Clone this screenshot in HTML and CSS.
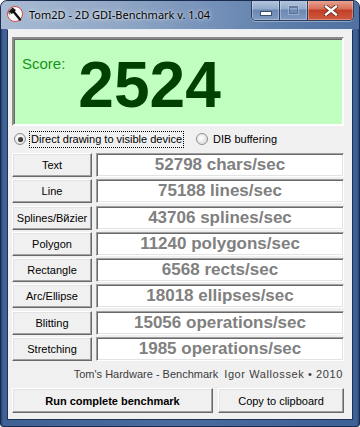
FILE: index.html
```html
<!DOCTYPE html>
<html lang="en">
<head>
    <meta charset="UTF-8">
    <meta name="viewport" content="width=device-width, initial-scale=1.0">
    <title>Tom2D - 2D GDI-Benchmark v. 1.04</title>
    <link rel="stylesheet" href="styles.css">
</head>
<body>

    <div class="window">
        <div class="titlebar">
            <svg class="app-icon" width="18" height="18" viewBox="0 0 18 18">
                <circle cx="9" cy="9" r="7.5" fill="#fff" stroke="#d64545" stroke-width="1"/>
                <path d="M2.5 6.5 L6.5 2.5 L10 5 L6 9 Z" fill="#1a1a1a"/>
                <path d="M2.5 6.5 L4 9.5" stroke="#666" stroke-width="1.4"/>
                <path d="M7.5 6.5 L14 14.5" stroke="#111" stroke-width="2.4" stroke-linecap="round"/>
            </svg>
            <span class="title">Tom2D - 2D GDI-Benchmark v. 1.04</span>
            <div class="caption-buttons">
                <div class="cap-btn cap-min"><span class="min-glyph"></span></div>
                <div class="cap-btn cap-max"><span class="max-glyph"></span></div>
                <div class="cap-btn cap-close">
                    <svg width="14" height="11" viewBox="0 0 14 11">
                        <path d="M2 1.5 L12 9.5 M12 1.5 L2 9.5" stroke="#5a2418" stroke-width="4" stroke-linecap="square"/>
                        <path d="M2 1.5 L12 9.5 M12 1.5 L2 9.5" stroke="#fff" stroke-width="2.4" stroke-linecap="square"/>
                    </svg>
                </div>
            </div>
        </div>

        <div class="client">
            <div class="score-box">
                <span class="score-label">Score:</span>
                <span class="score-value">2524</span>
            </div>

            <div class="modes">
                <div class="radio">
                    <span class="radio-dot checked"></span>
                    <span class="radio-text focused">Direct drawing to visible device</span>
                </div>
                <div class="radio second">
                    <span class="radio-dot"></span>
                    <span class="radio-text">DIB buffering</span>
                </div>
            </div>

            <div class="results">
                <div class="row"><div class="btn test">Text</div><div class="value">52798 chars/sec</div></div>
                <div class="row"><div class="btn test">Line</div><div class="value">75188 lines/sec</div></div>
                <div class="row"><div class="btn test">Splines/Bйzier</div><div class="value">43706 splines/sec</div></div>
                <div class="row"><div class="btn test">Polygon</div><div class="value">11240 polygons/sec</div></div>
                <div class="row"><div class="btn test">Rectangle</div><div class="value">6568 rects/sec</div></div>
                <div class="row"><div class="btn test">Arc/Ellipse</div><div class="value">18018 ellipses/sec</div></div>
                <div class="row"><div class="btn test">Blitting</div><div class="value">15056 operations/sec</div></div>
                <div class="row"><div class="btn test">Stretching</div><div class="value">1985 operations/sec</div></div>
            </div>

            <div class="credits">
                <span>Tom's Hardware - Benchmark</span>
                <span class="author">Igor Wallossek • 2010</span>
            </div>

            <div class="actions">
                <div class="btn run">Run complete benchmark</div>
                <div class="btn copy">Copy to clipboard</div>
            </div>
        </div>
    </div>

</body>
</html>
```

FILE: styles.css
```css
body {
    margin: 0;
    width: 360px;
    height: 427px;
    overflow: hidden;
    font-family: "Liberation Sans", Arial, sans-serif;
    background: #fff;
}

.window {
    box-sizing: border-box;
    width: 360px;
    height: 427px;
    border: 1px solid #1a2c4d;
    border-radius: 7px 7px 3px 3px;
    background: linear-gradient(to right, #233f6d, #3f6194 2px, #4a6b9d 50%, #3d6097 calc(100% - 2px), #233f6d);
    display: flex;
    flex-direction: column;
    overflow: hidden;
}

.titlebar {
    height: 28px;
    display: flex;
    align-items: flex-start;
    background: linear-gradient(to right, #a9bbd3 0%, #93a9c7 30%, #7490b8 60%, #5b7ca9 80%, #5071a1 100%);
    margin: 0 -1px;
    padding: 0 6px 0 6px;
}

.app-icon {
    margin-top: 4px;
    flex: none;
}

.title {
    margin-left: 5px;
    margin-top: 6px;
    font-family: "Noto Sans", "Open Sans", sans-serif;
    font-size: 11px;
    line-height: 16px;
    color: #000;
    text-shadow: 0 0 5px rgba(255, 255, 255, 0.8), 0 0 2px rgba(255, 255, 255, 0.6);
    white-space: nowrap;
}

.caption-buttons {
    margin-left: auto;
    margin-top: -1px;
    display: flex;
    height: 20px;
    border: 1px solid #2a3f61;
    border-top: none;
    border-radius: 0 0 5px 5px;
    overflow: hidden;
    box-shadow: 0 1px 0 rgba(255, 255, 255, 0.35);
}

.cap-btn {
    display: flex;
    align-items: center;
    justify-content: center;
    box-shadow: inset 0 0 0 1px rgba(255, 255, 255, 0.3);
}

.cap-min, .cap-max {
    width: 27px;
    background: linear-gradient(#b6c7de, #93aacb 45%, #6c88b2 50%, #7f9ac0);
    border-right: 1px solid #2a3f61;
}

.cap-close {
    width: 45px;
    background: linear-gradient(#e9a797, #d66e58 45%, #c23e26 50%, #cf5a3f);
}

.min-glyph {
    width: 10px;
    height: 3px;
    margin-top: 6px;
    background: #fff;
    border: 1px solid #39506f;
}

.max-glyph {
    width: 7px;
    height: 5px;
    border: 1px solid rgba(80, 100, 135, 0.7);
    border-top-width: 2px;
    box-shadow: 0 0 0 1px rgba(190, 205, 225, 0.5);
}

.client {
    flex: 1;
    margin: 0 6px 6px 6px;
    border: 1px solid #1d3358;
    border-top-color: #e6edf6;
    background: #f0f0f0;
    padding: 7px 8px 0 4px;
    display: flex;
    flex-direction: column;
}

.score-box {
    height: 89px;
    box-sizing: border-box;
    border: 2px solid;
    border-color: #8a8a8a #fff #fff #8a8a8a;
    box-shadow: inset 1px 1px 0 #696969;
    background: #c0ffc0;
    display: flex;
    align-items: flex-start;
}

.score-label {
    margin-left: 8px;
    margin-top: 17px;
    font-size: 15px;
    line-height: 15px;
    color: #1a921a;
}

.score-value {
    margin-left: 13px;
    margin-top: 14px;
    font-size: 64px;
    line-height: 64px;
    font-weight: bold;
    color: #004000;
}

.modes {
    margin-top: 4px;
    height: 18px;
    display: flex;
    align-items: center;
}

.radio {
    display: flex;
    align-items: center;
    margin-left: 2px;
}

.radio.second {
    margin-left: 12px;
}

.radio-dot {
    width: 12px;
    height: 12px;
    box-sizing: border-box;
    border-radius: 50%;
    border: 1px solid #8e8f8f;
    background: radial-gradient(circle at 40% 40%, #ffffff, #e2e2e2 70%, #d5d5d5);
    display: flex;
    align-items: center;
    justify-content: center;
}

.radio-dot.checked::after {
    content: "";
    width: 5px;
    height: 5px;
    border-radius: 50%;
    background: radial-gradient(circle at 40% 40%, #555, #111);
}

.radio-text {
    margin-left: 3px;
    padding: 1px 1px;
    border: 1px dotted transparent;
    font-size: 11px;
    line-height: 13px;
    color: #000;
    white-space: nowrap;
}

.radio-text.focused {
    border-color: #000;
}

.results {
    margin-top: 5px;
    display: flex;
    flex-direction: column;
    gap: 2.3px;
}

.row {
    height: 24px;
    display: flex;
    gap: 4px;
}

.btn {
    box-sizing: border-box;
    border: 1px solid;
    border-color: #fff #696969 #696969 #fff;
    box-shadow: inset -1px -1px 0 #a0a0a0, inset 1px 1px 0 #e3e3e3;
    background: #f0f0f0;
    display: flex;
    align-items: center;
    justify-content: center;
    font-size: 11px;
    color: #000;
    white-space: nowrap;
}

.btn.test {
    width: 80px;
    flex: none;
}

.value {
    flex: 1;
    box-sizing: border-box;
    border: 1px solid;
    border-color: #a0a0a0 #fff #fff #a0a0a0;
    box-shadow: inset 1px 1px 0 #696969, inset -1px -1px 0 #e3e3e3;
    background: #fff;
    display: flex;
    align-items: center;
    justify-content: center;
    font-size: 17px;
    font-weight: bold;
    color: #808080;
    white-space: nowrap;
}

.credits {
    margin-top: 6px;
    height: 14px;
    display: flex;
    justify-content: flex-end;
    gap: 6px;
    padding-right: 1px;
    font-size: 11px;
    line-height: 14px;
    color: #3c3c3c;
}

.author {
    letter-spacing: 0.6px;
}

.actions {
    margin-top: 7px;
    height: 25px;
    display: flex;
    gap: 5px;
}

.btn.run {
    width: 201px;
    font-weight: bold;
}

.btn.copy {
    flex: 1;
}
```
